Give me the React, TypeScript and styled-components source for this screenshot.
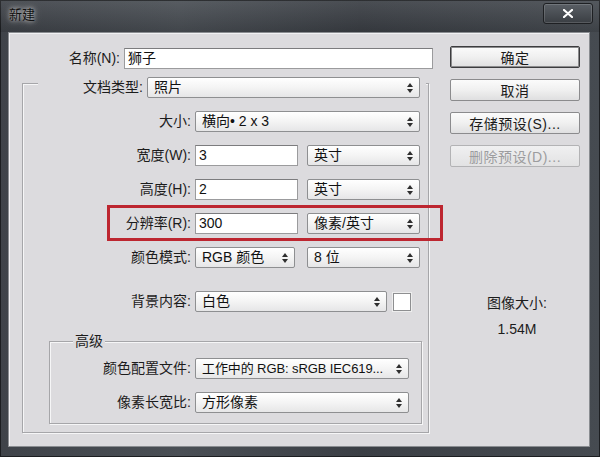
import React from "react";
import styled, { createGlobalStyle } from "styled-components";

const GlobalStyle = createGlobalStyle`
  html, body {
    margin: 0;
    padding: 0;
    background: #2b2e33;
  }
  * {
    box-sizing: border-box;
  }
`;

const FONT = `"Liberation Sans", "Noto Sans CJK SC", sans-serif`;
const PANEL_BG = "#dcdbde";

const Window = styled.div`
  width: 600px;
  height: 457px;
  display: flex;
  flex-direction: column;
  background: linear-gradient(90deg, #3f4349 0%, #4a4f55 30%, #3b3f45 60%, #464b51 100%);
  box-shadow: inset 0 0 0 1px #1c1e21;
  font-family: ${FONT};
  overflow: hidden;
`;

const TitleBar = styled.div`
  height: 32px;
  display: flex;
  align-items: flex-start;
  justify-content: space-between;
  padding: 0 7px 0 9px;
  background: linear-gradient(180deg, rgba(255, 255, 255, 0.08), rgba(0, 0, 0, 0.12));
`;

const Title = styled.span`
  margin-top: 7px;
  font-size: 13px;
  line-height: 16px;
  color: #111;
  text-shadow: 0 0 4px rgba(230, 230, 230, 0.9), 0 0 8px rgba(200, 200, 200, 0.7);
`;

const CloseButton = styled.div`
  width: 50px;
  height: 21px;
  margin-top: 3px;
  display: flex;
  align-items: center;
  justify-content: center;
  border: 1px solid #1e2023;
  border-radius: 3px;
  background: linear-gradient(180deg, #5a5f65, #3a3e43);
  box-shadow: inset 0 0 0 1px rgba(255, 255, 255, 0.15);
`;

const Body = styled.div`
  flex: 1;
  margin: 0 10px 10px 8px;
  display: flex;
  background: ${PANEL_BG};
  box-shadow: inset 0 0 0 1px #8a8d91, inset 2px 2px 0 #f1f1f3;
`;

const LeftPane = styled.div`
  width: 435px;
  padding-top: 16px;
  display: flex;
  flex-direction: column;
`;

const RightPane = styled.div`
  width: 130px;
  margin-left: 7px;
  padding-top: 14px;
  display: flex;
  flex-direction: column;
  gap: 11px;
`;

const Row = styled.div<{ $mt?: number; $annotated?: boolean }>`
  position: relative;
  height: 21px;
  margin-top: ${(p) => p.$mt ?? 0}px;
  display: flex;
  align-items: center;
  gap: 4px;

  ${(p) =>
    p.$annotated &&
    `
    &::after {
      content: "";
      position: absolute;
      left: 84px;
      right: -15px;
      top: -8px;
      bottom: -7px;
      border: 3px solid #bd2630;
      pointer-events: none;
    }
  `}
`;

const DocRow = styled(Row)`
  margin-top: -7px;
  margin-left: 15px;
  width: 388px;
  background: ${PANEL_BG};
`;

const Label = styled.label<{ $w: number }>`
  width: ${(p) => p.$w}px;
  flex: none;
  text-align: right;
  font-size: 14px;
  line-height: 21px;
  color: #1c1c1c;
  white-space: nowrap;
`;

const TextInput = styled.div<{ $w: number }>`
  width: ${(p) => p.$w}px;
  height: 21px;
  flex: none;
  padding-left: 3px;
  background: #fff;
  border: 1px solid #9b9b9d;
  border-top-color: #7c7c7e;
  font-size: 14px;
  line-height: 19px;
  color: #111;
`;

const SelectBox = styled.div<{ $w: number; $gap?: number }>`
  width: ${(p) => p.$w}px;
  height: 21px;
  flex: none;
  margin-left: ${(p) => p.$gap ?? 0}px;
  display: flex;
  align-items: center;
  gap: 3px;
  padding: 0 6px 0 6px;
  background: linear-gradient(180deg, #ffffff 0%, #f4f4f4 50%, #e6e6e7 100%);
  border: 1px solid #8e8f91;
  border-radius: 2px;
  font-size: 14px;
  color: #111;
`;

const SelectText = styled.span<{ $compact?: boolean }>`
  flex: 1;
  white-space: nowrap;
  overflow: hidden;
  line-height: 19px;
  font-size: ${(p) => (p.$compact ? "13px" : "14px")};
  letter-spacing: ${(p) => (p.$compact ? "-0.1px" : "0")};
`;

const Swatch = styled.div`
  width: 18px;
  height: 18px;
  margin-left: 2px;
  background: #fff;
  border: 1px solid #8e8f91;
  box-shadow: 0 0 0 1px #eeeeee;
`;

const GroupBox = styled.div`
  width: 407px;
  height: 350px;
  margin: 14px 0 0 14px;
  border: 1px solid #a6a6a9;
  box-shadow: inset 1px 1px 0 #f6f6f7, 1px 1px 0 #f6f6f7;
  display: flex;
  flex-direction: column;
`;

const AdvGroup = styled.div`
  width: 373px;
  height: 83px;
  margin: 29px 0 0 26px;
  border: 1px solid #a6a6a9;
  box-shadow: inset 1px 1px 0 #f6f6f7, 1px 1px 0 #f6f6f7;
  display: flex;
  flex-direction: column;
`;

const AdvTitle = styled.span`
  align-self: flex-start;
  margin: -9px 0 0 23px;
  padding: 0 2px;
  background: ${PANEL_BG};
  font-size: 14px;
  line-height: 17px;
  color: #1c1c1c;
`;

const Button = styled.div<{ $primary?: boolean; $disabled?: boolean }>`
  height: 22px;
  display: flex;
  align-items: center;
  justify-content: center;
  border: 1px solid ${(p) => (p.$primary ? "#3c3c3e" : p.$disabled ? "#b3b3b5" : "#8b8b8d")};
  border-radius: 2px;
  background: ${(p) =>
    p.$disabled
      ? "linear-gradient(180deg, #f0f0f1, #e2e2e3)"
      : "linear-gradient(180deg, #fbfbfb 0%, #f0f0f0 50%, #dfdfe0 100%)"};
  box-shadow: ${(p) => (p.$primary ? "inset 0 0 0 1px #8b8b8d" : "none")};
  font-size: 14px;
  color: ${(p) => (p.$disabled ? "#9c9c9e" : "#1a1a1a")};
  letter-spacing: 0.5px;
`;

const InfoBlock = styled.div`
  margin-top: 117px;
  padding-left: 4px;
  display: flex;
  flex-direction: column;
  align-items: center;
  gap: 10px;
  font-size: 14px;
  line-height: 16px;
  color: #1c1c1c;
`;

const Arrows = () => (
  <svg width="6" height="10" viewBox="0 0 6 10">
    <path d="M3 0 L6 4 H0 Z M3 10 L0 6 H6 Z" fill="#2e2e2e" />
  </svg>
);

const Select = ({
  w,
  gap,
  compact,
  children,
}: {
  w: number;
  gap?: number;
  compact?: boolean;
  children: React.ReactNode;
}) => (
  <SelectBox $w={w} $gap={gap}>
    <SelectText $compact={compact}>{children}</SelectText>
    <Arrows />
  </SelectBox>
);

const CloseIcon = () => (
  <svg width="10" height="9" viewBox="0 0 10 9">
    <path d="M1 1 L9 8 M9 1 L1 8" stroke="#fff" strokeWidth="2.2" strokeLinecap="round" />
  </svg>
);

const App = () => {
  return (
    <>
      <GlobalStyle />
      <Window>
        <TitleBar>
          <Title>新建</Title>
          <CloseButton>
            <CloseIcon />
          </CloseButton>
        </TitleBar>
        <Body>
          <LeftPane>
            <Row>
              <Label $w={112}>名称(N):</Label>
              <TextInput $w={309}>狮子</TextInput>
            </Row>
            <GroupBox>
              <DocRow>
                <Label $w={105}>文档类型:</Label>
                <Select w={273}>照片</Select>
              </DocRow>
              <Row $mt={13}>
                <Label $w={168}>大小:</Label>
                <Select w={225}>横向• 2 x 3</Select>
              </Row>
              <Row $mt={13}>
                <Label $w={168}>宽度(W):</Label>
                <TextInput $w={103}>3</TextInput>
                <Select w={113} gap={5}>英寸</Select>
              </Row>
              <Row $mt={13}>
                <Label $w={168}>高度(H):</Label>
                <TextInput $w={103}>2</TextInput>
                <Select w={113} gap={5}>英寸</Select>
              </Row>
              <Row $mt={13} $annotated>
                <Label $w={168}>分辨率(R):</Label>
                <TextInput $w={103}>300</TextInput>
                <Select w={113} gap={5}>像素/英寸</Select>
              </Row>
              <Row $mt={13}>
                <Label $w={168}>颜色模式:</Label>
                <Select w={100}>RGB 颜色</Select>
                <Select w={113} gap={8}>8 位</Select>
              </Row>
              <Row $mt={23}>
                <Label $w={168}>背景内容:</Label>
                <Select w={192}>白色</Select>
                <Swatch />
              </Row>
              <AdvGroup>
                <AdvTitle>高级</AdvTitle>
                <Row $mt={8}>
                  <Label $w={141}>颜色配置文件:</Label>
                  <Select w={214} compact>
                    工作中的 RGB: sRGB IEC619...
                  </Select>
                </Row>
                <Row $mt={13}>
                  <Label $w={141}>像素长宽比:</Label>
                  <Select w={214}>方形像素</Select>
                </Row>
              </AdvGroup>
            </GroupBox>
          </LeftPane>
          <RightPane>
            <Button $primary>确定</Button>
            <Button>取消</Button>
            <Button>存储预设(S)...</Button>
            <Button $disabled>删除预设(D)...</Button>
            <InfoBlock>
              <span>图像大小:</span>
              <span>1.54M</span>
            </InfoBlock>
          </RightPane>
        </Body>
      </Window>
    </>
  );
};

export default App;
